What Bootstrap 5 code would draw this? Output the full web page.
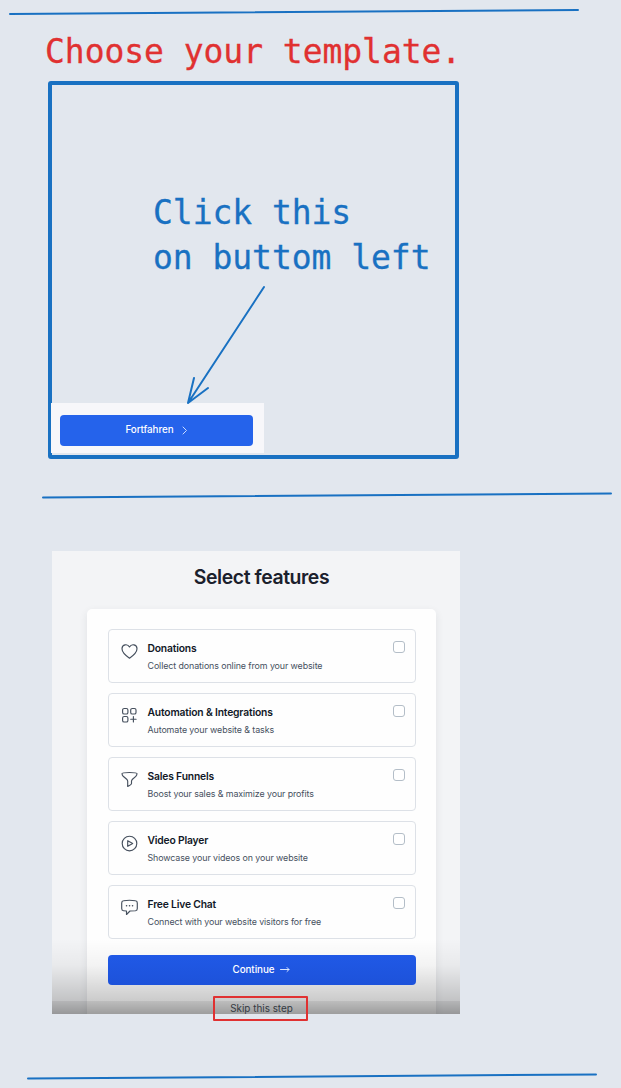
<!DOCTYPE html>
<html lang="en">
<head>
<meta charset="utf-8">
<meta name="viewport" content="width=device-width, initial-scale=1">
<title>Choose your template</title>
<link href="https://cdn.jsdelivr.net/npm/bootstrap@5.3.0/dist/css/bootstrap.min.css" rel="stylesheet">
<style>
  body { background: #e2e7ee; font-family: Inter, sans-serif; height: 1088px; overflow: hidden; }
  svg { display: block; fill: none; stroke-linecap: round; stroke-linejoin: round; }
  .rule { height: 20px; stroke: #1971c2; stroke-width: 2; }
  .rule-mid { margin-top: 26px; }
  .rule-end { margin-top: 52.500px; }
  .hand { font-family: "DejaVu Sans Mono", monospace; font-size: 33px; line-height: 45px; white-space: pre; letter-spacing: -.05px; -webkit-text-stroke: .3px; }
  .step-title { color: #e03131; margin: 9px 0 0 45px; }
  .frame { width: 411px; height: 378px; margin: 7px 0 0 48px; border: 4px solid #1971c2; border-radius: 3px; }
  .hint { color: #1971c2; margin: 105px 0 0 101px; }
  .arrow { left: 132px; top: 199px; stroke: #1971c2; stroke-width: 2; }
  .strip { width: 213px; height: 50px; background: #f7f7fa; padding: 12px 11px 7px 9px; margin: 0 0 2px -1px; }
  .btn-main { --bs-btn-bg: #2563eb; --bs-btn-border-color: #2563eb; --bs-btn-color: #fff; border: 0; border-radius: 4px; font-size: 9.8px; line-height: 12px; font-weight: 500; letter-spacing: -.05px; }
  .strip span { margin-top: -1px; }
  .shot { width: 408.500px; height: 463px; margin: 45.500px 0 0 51.500px; background: #f3f4f6; }
  .shot h1 { font-size: 19.4px; line-height: 24px; font-weight: 600; color: #1a202c; padding-top: 14px; margin: 0 0 20.500px; letter-spacing: -.42px; }
  .clip { height: 463px; overflow: hidden; padding: 0 24px 0 35.500px; }
  .panel { height: 410px; background: #fefefe; border-radius: 5px 5px 0 0; padding: 20px 20.500px 0 20.500px; box-shadow: 0 3px 9px rgba(30,40,60,.09); gap: 10px; }
  .feature { height: 54px; border: 1px solid #dde1e7; border-radius: 4px; padding: 12px 10px 0 12.500px; }
  .feature svg { width: 17px; height: 17px; margin: .5px 9.500px 0 0; stroke: #46505e; stroke-width: 1.15; flex: none; }
  .feature b { display: block; font-size: 10.3px; line-height: 13px; font-weight: 600; color: #111827; white-space: nowrap; letter-spacing: -.17px; }
  .feature span { display: block; font-size: 8.9px; line-height: 12px; margin-top: 4.500px; color: #465060; white-space: nowrap; letter-spacing: -.1px; }
  .feature .form-check-input { width: 12px; height: 12px; margin: -1.500px 0 0; border: 1px solid #b4bec8; border-radius: 3px; background-color: #fff; flex: none; }
  .go { height: 30px; flex: none; margin-top: 5.500px; position: relative; z-index: 1; background: linear-gradient(#2059e6, #1d52da); }
  .shade { left: 0; right: 0; bottom: 0; height: 75px; background: linear-gradient(transparent, rgba(0,0,0,.045) 35%, rgba(0,0,0,.2) 82%, rgba(0,0,0,.26) 83%, rgba(0,0,0,.38)); pointer-events: none; }
  .clip, .shade { z-index: auto; }
  .skip { left: 161.500px; top: 445px; width: 95px; height: 25.500px; border: 2px solid #e03131; border-radius: 1px; font-size: 9.9px; line-height: 21px; color: #343a42; padding-left: 2px; }
</style>
</head>
<body>
<svg class="rule w-100"><path d="M10 14 578 10"/></svg>
<h2 class="hand fw-normal step-title">Choose your template.</h2>
<section class="frame position-relative d-flex flex-column">
  <div class="hand hint">Click this
on buttom left</div>
  <svg class="arrow position-absolute" width="84" height="122"><path d="M80 3 4 119M10 94 4 119 24 104"/></svg>
  <div class="strip mt-auto">
    <button class="btn btn-main w-100 h-100 p-0 d-flex align-items-center justify-content-center"><span>Fortfahren</span><svg class="ms-2" width="6" height="9" stroke="#cbdcff"><path d="M1 1 4.500 4.500 1 8"/></svg></button>
  </div>
</section>
<svg class="rule rule-mid w-100"><path d="M43 12.500 611 8.500"/></svg>
<section class="shot position-relative">
  <div class="clip">
  <h1 class="text-center">Select features</h1>
  <div class="panel d-flex flex-column">
    <label class="feature d-flex align-items-start"><svg viewBox="0 0 17 17"><path d="M8.500 15.200C6 13.500 1 9.800 1 5.800 1 1.300 6.500.400 8.500 4 10.500.400 16 1.300 16 5.800c0 4-5 7.700-7.500 9.400Z"/></svg><div><b>Donations</b><span>Collect donations online from your website</span></div><input type="checkbox" class="form-check-input ms-auto"></label>
    <label class="feature d-flex align-items-start"><svg viewBox="0 0 17 17"><rect x="1.600" y="1.500" width="5.300" height="5.500" rx="1.600"/><rect x="9.700" y="1.500" width="5.300" height="5.500" rx="1.600"/><rect x="1.600" y="9.500" width="5.300" height="5.500" rx="1.600"/><path d="M12.400 9.500v5.500M9.700 12.200h5.400"/></svg><div><b>Automation &amp; Integrations</b><span>Automate your website &amp; tasks</span></div><input type="checkbox" class="form-check-input ms-auto"></label>
    <label class="feature d-flex align-items-start"><svg viewBox="0 0 17 17"><path d="M1 2.600Q1 1.500 8.500 1.500T16 2.600Q16 4.200 14.800 5.300L11.500 8.300Q10.500 9.200 10.500 10.300V12.500Q10.500 13.500 6.700 15.500V10.300Q6.700 9.200 5.700 8.300L2.200 5.300Q1 4.200 1 2.600Z"/></svg><div><b>Sales Funnels</b><span>Boost your sales &amp; maximize your profits</span></div><input type="checkbox" class="form-check-input ms-auto"></label>
    <label class="feature d-flex align-items-start"><svg viewBox="0 0 17 17"><circle cx="8.500" cy="8.500" r="7.300"/><path d="M6.700 5.700v5.600l5-2.800Z"/></svg><div><b>Video Player</b><span>Showcase your videos on your website</span></div><input type="checkbox" class="form-check-input ms-auto"></label>
    <label class="feature d-flex align-items-start"><svg viewBox="0 0 17 17"><path d="M2.500 1.800Q8.500.700 14.500 1.800 16.300 2 16.300 4V9.500Q16.300 11.500 14.500 11.700L9 12 5.500 15.500V12L2.500 11.700Q.7 11.500.7 9.500V4Q.7 2 2.500 1.800Z"/><path stroke-width="1.500" d="M5.500 6.800h.1M8.500 6.800h.1M11.500 6.800h.1"/></svg><div><b>Free Live Chat</b><span>Connect with your website visitors for free</span></div><input type="checkbox" class="form-check-input ms-auto"></label>
    <button class="btn btn-main go p-0 d-flex align-items-center justify-content-center"><span>Continue</span><svg style="margin-left:6px" width="10" height="7" stroke="#dbe6ff"><path d="M.5 3.500H9M7 1.500 9 3.500 7 5.500"/></svg></button>
  </div>
  </div>
  <div class="shade position-absolute"></div>
  <a class="skip position-absolute text-center text-decoration-none" href="#">Skip this step</a>
</section>
<svg class="rule rule-end w-100"><path d="M28 12.500 596 8.500"/></svg>
<script src="https://cdn.jsdelivr.net/npm/bootstrap@5.3.0/dist/js/bootstrap.bundle.min.js"></script>
</body>
</html>
